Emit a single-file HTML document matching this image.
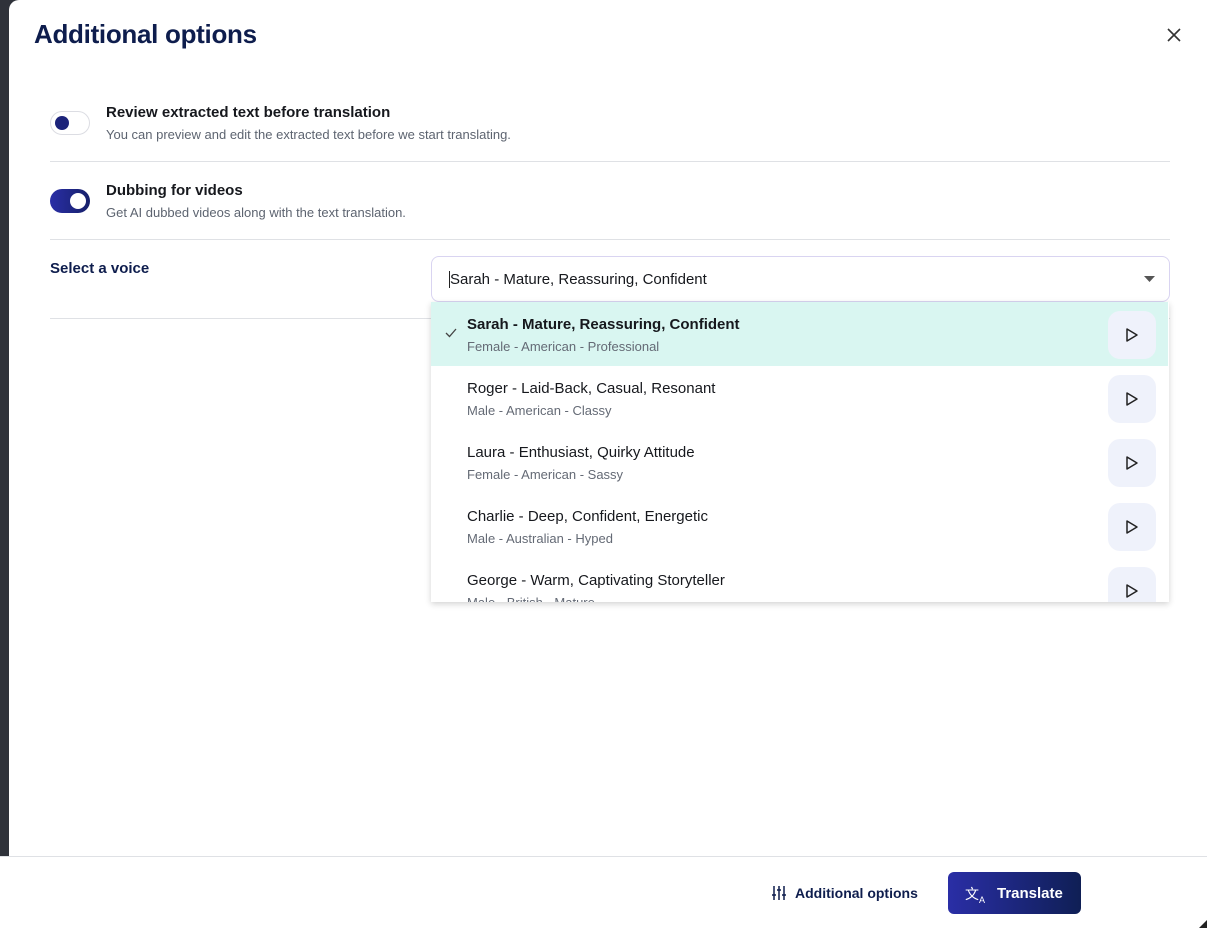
<!DOCTYPE html>
<html><head><style>
*{margin:0;padding:0;box-sizing:border-box}
body{width:1207px;height:928px;background:#2f323a;font-family:"Liberation Sans",sans-serif;position:relative;overflow:hidden}
.modal{position:absolute;left:9px;top:0;width:1198px;height:928px;background:#fff;border-top-left-radius:10px}
.abs{position:absolute}
h1{position:absolute;left:25px;top:19px;font-size:26px;font-weight:bold;color:#0e1d4d;letter-spacing:-0.3px}
.t{font-size:15px;font-weight:bold;color:#16181d}
.s{font-size:13px;color:#5d6470}
.hr{position:absolute;left:41px;width:1120px;height:1px;background:#dfe1e5}
.row{position:absolute;left:0;width:737px;height:64px}
.row .n{position:absolute;left:36px;top:14px;font-size:15px;color:#16181d}
.row .d{position:absolute;left:36px;top:37px;font-size:13px;color:#646a75}
.play{position:absolute;left:677px;top:9px;width:48px;height:48px;border-radius:12px;background:#eff2fb}
.play svg{position:absolute;left:17px;top:16px}
</style></head><body>
<div class="modal">
<h1>Additional options</h1>
<svg class="abs" style="left:1157px;top:27px" width="16" height="16" viewBox="0 0 16 16"><path d="M2 2L14 14M14 2L2 14" stroke="#333" stroke-width="1.6"/></svg>

<div class="abs" style="left:41px;top:111px;width:40px;height:24px;border:1px solid #dcdde3;border-radius:12px;background:#fff"></div>
<div class="abs" style="left:46px;top:116px;width:14px;height:14px;border-radius:50%;background:#1c237a"></div>
<div class="abs t" style="left:97px;top:104px">Review extracted text before translation</div>
<div class="abs s" style="left:97px;top:127px">You can preview and edit the extracted text before we start translating.</div>
<div class="hr" style="top:161px"></div>

<div class="abs" style="left:41px;top:189px;width:40px;height:24px;border-radius:12px;background:linear-gradient(90deg,#2a2ea6,#16206a)"></div>
<div class="abs" style="left:61px;top:193px;width:16px;height:16px;border-radius:50%;background:#fff"></div>
<div class="abs t" style="left:97px;top:182px">Dubbing for videos</div>
<div class="abs s" style="left:97px;top:205px">Get AI dubbed videos along with the text translation.</div>
<div class="hr" style="top:239px"></div>

<div class="abs" style="left:41px;top:260px;font-size:15px;font-weight:bold;color:#0e1d4d">Select a voice</div>
<div class="hr" style="top:318px"></div>

<div class="abs" style="left:422px;top:256px;width:739px;height:46px;border:1.5px solid #d9d4f1;border-radius:8px;background:#fff"></div>
<div class="abs" style="left:440px;top:271px;font-size:15px;color:#16181d;border-left:1px solid #222">Sarah - Mature, Reassuring, Confident</div>
<svg class="abs" style="left:1135px;top:276px" width="12" height="6"><path d="M0 0H11L5.5 6Z" fill="#555"/></svg>

<div class="abs" style="left:422px;top:302px;width:738px;height:300px;background:#fff;box-shadow:0 2px 6px rgba(0,0,0,.18);overflow:hidden">
 <div class="row" style="top:0;background:#d9f6f1">
  <svg class="abs" style="left:14px;top:26px" width="12" height="10"><path d="M1 5L4.5 8.5L11 1" stroke="#444" stroke-width="1.3" fill="none"/></svg>
  <div class="n" style="font-weight:bold">Sarah - Mature, Reassuring, Confident</div><div class="d">Female - American - Professional</div>
  <div class="play"><svg width="14" height="16"><path d="M2 2L12 8L2 14Z" fill="none" stroke="#222" stroke-width="1.5" stroke-linejoin="round"/></svg></div></div>
 <div class="row" style="top:64px"><div class="n">Roger - Laid-Back, Casual, Resonant</div><div class="d">Male - American - Classy</div>
  <div class="play"><svg width="14" height="16"><path d="M2 2L12 8L2 14Z" fill="none" stroke="#222" stroke-width="1.5" stroke-linejoin="round"/></svg></div></div>
 <div class="row" style="top:128px"><div class="n">Laura - Enthusiast, Quirky Attitude</div><div class="d">Female - American - Sassy</div>
  <div class="play"><svg width="14" height="16"><path d="M2 2L12 8L2 14Z" fill="none" stroke="#222" stroke-width="1.5" stroke-linejoin="round"/></svg></div></div>
 <div class="row" style="top:192px"><div class="n">Charlie - Deep, Confident, Energetic</div><div class="d">Male - Australian - Hyped</div>
  <div class="play"><svg width="14" height="16"><path d="M2 2L12 8L2 14Z" fill="none" stroke="#222" stroke-width="1.5" stroke-linejoin="round"/></svg></div></div>
 <div class="row" style="top:256px"><div class="n">George - Warm, Captivating Storyteller</div><div class="d">Male - British - Mature</div>
  <div class="play"><svg width="14" height="16"><path d="M2 2L12 8L2 14Z" fill="none" stroke="#222" stroke-width="1.5" stroke-linejoin="round"/></svg></div></div>
</div>
</div>
<div class="abs" style="left:0;top:856px;width:1207px;height:72px;background:#fff;border-top:1px solid #dfe1e5"></div>
<svg class="abs" style="left:771px;top:885px" width="16" height="16" viewBox="0 0 16 16" stroke="#0e1d4d" stroke-width="1.5"><path d="M3 1V15M8 1V15M13 1V15M1 10H5M6 5H10M11 10H15"/></svg>
<div class="abs" style="left:795px;top:885px;font-size:14px;font-weight:bold;color:#0e1d4d">Additional options</div>
<div class="abs" style="left:948px;top:872px;width:133px;height:42px;border-radius:6px;background:linear-gradient(90deg,#2a2ea6,#0f1f55)"></div>
<div class="abs" style="left:965px;top:884px;font-size:14px;color:#fff">文<sub style="font-size:9px">A</sub></div>
<div class="abs" style="left:997px;top:885px;font-size:15px;font-weight:bold;color:#fff">Translate</div>
<svg class="abs" style="left:1199px;top:920px" width="8" height="8"><path d="M8 0V8H0Z" fill="#222"/></svg>
</body></html>
